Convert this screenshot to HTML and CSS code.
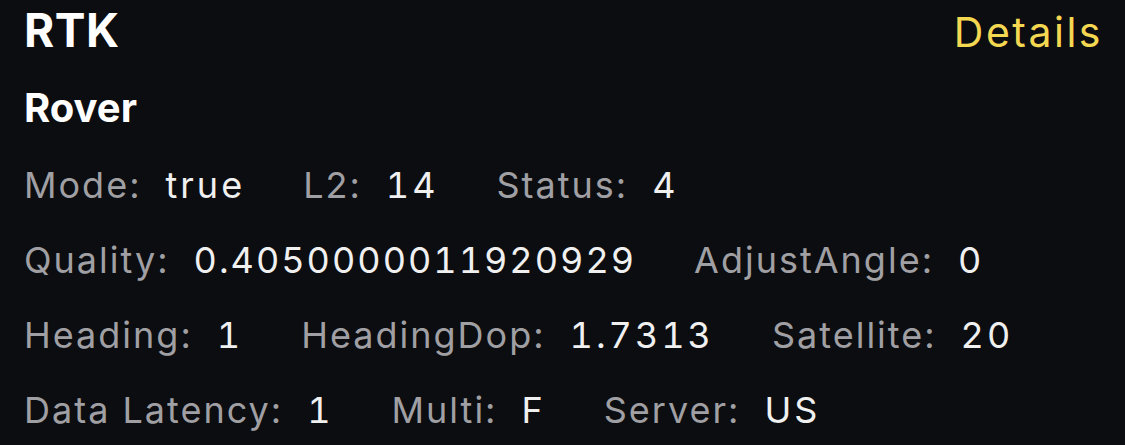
FILE: index.html
```html
<!DOCTYPE html>
<html lang="en">
<head>
  <meta charset="UTF-8">
  <title>RTK</title>
  <link rel="stylesheet" href="styles.css">
</head>
<body>

<div class="card">
  <div class="card-head">
    <h1 class="card-title">RTK</h1>
    <a class="card-link">Details</a>
  </div>
  <h2 class="card-sub">Rover</h2>

  <div class="row">
    <div class="field"><span class="field-label">Mode:</span><span class="field-value">true</span></div>
    <div class="field"><span class="field-label">L2:</span><span class="field-value">14</span></div>
    <div class="field"><span class="field-label">Status:</span><span class="field-value">4</span></div>
  </div>
  <div class="row">
    <div class="field"><span class="field-label">Quality:</span><span class="field-value field-value-long">0.4050000011920929</span></div>
    <div class="field"><span class="field-label">AdjustAngle:</span><span class="field-value">0</span></div>
  </div>
  <div class="row">
    <div class="field"><span class="field-label">Heading:</span><span class="field-value">1</span></div>
    <div class="field"><span class="field-label">HeadingDop:</span><span class="field-value">1.7313</span></div>
    <div class="field"><span class="field-label">Satellite:</span><span class="field-value">20</span></div>
  </div>
  <div class="row">
    <div class="field"><span class="field-label">Data Latency:</span><span class="field-value">1</span></div>
    <div class="field"><span class="field-label">Multi:</span><span class="field-value">F</span></div>
    <div class="field"><span class="field-label">Server:</span><span class="field-value">US</span></div>
  </div>
</div>

</body>
</html>
```

FILE: styles.css
```css
* {
  border: 0;
  padding: 0;
  margin: 0;
}
html, body {
  background: #0c0d10;
}
body {
  font-family: Inter, "Noto Sans", sans-serif;
  color: #f2f2f2;
}
.card {
  width: 1125px;
  height: 445px;
  padding: 0 24px 0 24px;
  box-sizing: border-box;
}
.card-head {
  display: flex;
  justify-content: space-between;
  align-items: baseline;
  height: 60px;
}
.card-title {
  font-size: 46px;
  line-height: 60px;
  font-weight: 700;
  letter-spacing: 0.5px;
  color: #ffffff;
}
.card-link {
  font-size: 41px;
  line-height: 60px;
  letter-spacing: 2.5px;
  margin-right: -2px;
  color: #f4d852;
}
.card-sub {
  margin-top: 10px;
  font-size: 40px;
  line-height: 75px;
  font-weight: 700;
  color: #ffffff;
}
.row {
  display: flex;
  gap: 58px;
  font-size: 36px;
  line-height: 75px;
}
.card-sub + .row {
  margin-top: 3px;
}
.field {
  display: flex;
  gap: 24px;
}
.field-label {
  color: #a0a0a4;
  letter-spacing: 2px;
}
.field-value {
  color: #f0f0f0;
  letter-spacing: 3px;
  font-variant-numeric: tabular-nums;
}
.field-value-long {
  letter-spacing: 2px;
}
```
